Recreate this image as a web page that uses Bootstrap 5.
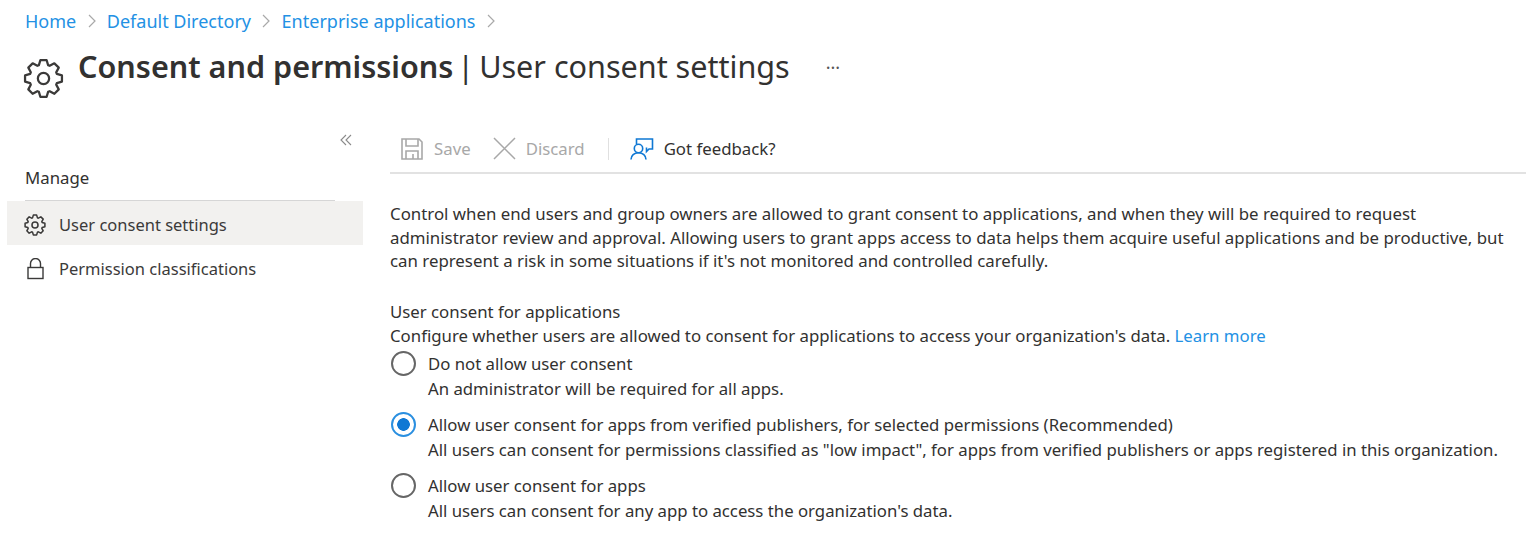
<!doctype html>
<html lang="en">
<head>
<meta charset="utf-8">
<title>Consent and permissions</title>
<link href="https://cdn.jsdelivr.net/npm/bootstrap@5.3.0/dist/css/bootstrap.min.css" rel="stylesheet">
<style>
html,body{height:100%;overflow:hidden}
body{font-family:"Noto Sans","Open Sans",sans-serif;font-size:16.8px;line-height:24px;color:#323130;background:#fff}
a{color:#2391e4;text-decoration:none}
.crumbs{padding:0 0 0 25px;height:42px;gap:10.300px;font-size:18px}
.crumbs svg{width:10px;height:14px}
.head-row{padding:2px 0 0 23px;height:74px}
.head-gear{width:41px;height:41px;margin-top:14px;margin-right:14px;flex:none}
.head-title{font-size:30.550px;line-height:44px;margin:0;font-weight:400}
.head-title b{font-weight:600}
.title-bar{margin:0 -3px 0 -4px}
.head-dots{margin-left:36px;margin-top:5px;font-size:18px;color:#555;line-height:36px}
.main-wrap{padding-top:11px}
.side-col{width:363px;flex:none;padding-left:7px}
.collapse-btn{height:34px;padding:6px 10px 0 0}
.collapse-btn svg{width:14px;height:14px;display:block;margin-left:auto}
.side-head{margin:0 28px 0 18px;height:40px;padding-top:5px;border-bottom:1px solid #d6d6d6}
.side-item{height:44px;padding:4px 0 0 17px;gap:13px;font-size:16.500px;color:#3b3a39}
.side-item.is-on{background:#f2f1ef}
.side-item svg{width:22px;height:22px;flex:none}
.content-col{flex:1;padding:0 5px 0 27px;min-width:0}
.tool-row{height:47px;border-bottom:2px solid #e2e2e2;padding:0 0 2px 11px}
.tool-off{color:#a8a8a8}
.ic-gap{margin-right:11px;flex:none}
.ic-fb{margin-right:10px;flex:none}
.ic-x{margin:0 10px 0 22px;flex:none}
.tool-sep{width:1px;height:22px;background:#e0e0e0;margin:0 21px 0 23px}
.intro{margin:28px 0 0;font-size:16.830px;line-height:23.500px;max-width:1130px}
.sect{margin:27.500px 0 0;line-height:24px}
.opt{gap:12px;margin-top:2.500px;padding-left:1px}
.opt .form-check-input{width:25px;height:25px;margin:0;flex:none;background-color:#fff;border:2px solid #666}
.opt .form-check-input:checked{border-color:#2a8fe0;background-color:#fff;background-image:radial-gradient(circle,#0f78d4 0,#0f78d4 6px,transparent 6.600px)}
.opt-txt{font-size:16.750px;line-height:25px}
.opt+.opt{margin-top:11px}
</style>
</head>
<body>
<nav class="crumbs d-flex align-items-center">
  <a href="#">Home</a>
  <svg viewBox="0 0 10 14" fill="none" stroke="#a9a9a9" stroke-width="1.2"><path d="M2 1l6 6-6 6"/></svg>
  <a href="#">Default Directory</a>
  <svg viewBox="0 0 10 14" fill="none" stroke="#a9a9a9" stroke-width="1.2"><path d="M2 1l6 6-6 6"/></svg>
  <a href="#">Enterprise applications</a>
  <svg viewBox="0 0 10 14" fill="none" stroke="#a9a9a9" stroke-width="1.2"><path d="M2 1l6 6-6 6"/></svg>
</nav>
<header class="head-row d-flex align-items-start">
  <svg class="head-gear" viewBox="0 0 40 40" fill="none" stroke="#3b3a39" stroke-width="2.200" stroke-linejoin="round">
    <circle cx="20" cy="20" r="5.500"/>
    <path d="M15.500 7L17 2H23L24.500 7L26 7.600L30.600 5.200L34.900 9.400L32.400 14L33 15.500L38 17V23L33 24.500L32.400 26L34.900 30.600L30.600 34.900L26 32.400L24.500 33L23 38H17L15.500 33L14 32.400L9.400 34.900L5.200 30.600L7.600 26L7 24.500L2 23V17L7 15.500L7.600 14L5.200 9.400L9.400 5.200L14 7.600Z"/>
  </svg>
  <h1 class="head-title"><b>Consent and permissions</b> <span class="title-bar">|</span> User consent settings</h1>
  <span class="head-dots">···</span>
</header>
<div class="main-wrap d-flex">
  <aside class="side-col">
    <div class="collapse-btn">
      <svg viewBox="0 0 14 14" fill="none" stroke="#8a8a8a" stroke-width="1.1"><path d="M7 2L2 7l5 5M12 2L7 7l5 5"/></svg>
    </div>
    <div class="side-head">Manage</div>
    <div class="side-item is-on d-flex align-items-center">
      <svg viewBox="0 0 40 40" fill="none" stroke="#3b3a39" stroke-width="2.800" stroke-linejoin="round"><circle cx="20" cy="20" r="5.500"/><path d="M15.500 7L17 2H23L24.500 7L26 7.600L30.600 5.200L34.900 9.400L32.400 14L33 15.500L38 17V23L33 24.500L32.400 26L34.900 30.600L30.600 34.900L26 32.400L24.500 33L23 38H17L15.500 33L14 32.400L9.400 34.900L5.200 30.600L7.600 26L7 24.500L2 23V17L7 15.500L7.600 14L5.200 9.400L9.400 5.200L14 7.600Z"/></svg>
      <span>User consent settings</span>
    </div>
    <div class="side-item d-flex align-items-center">
      <svg viewBox="0 0 22 22" fill="none" stroke="#3b3a39" stroke-width="1.400"><rect x="4" y="9.500" width="15" height="11"/><path d="M6.500 9.500V5.500a5 5 0 0 1 10 0v4"/></svg>
      <span>Permission classifications</span>
    </div>
  </aside>
  <main class="content-col">
    <div class="tool-row d-flex align-items-center">
      <svg class="ic-gap" width="22" height="22" viewBox="0 0 22 22" fill="none" stroke="#a8a8a8" stroke-width="1.600"><path d="M1 1h17l3 3v17H1z"/><path d="M5 1v7h12V1M5 21v-8h12v8M12 16v5"/></svg>
      <span class="tool-off">Save</span>
      <svg class="ic-x" width="23" height="23" viewBox="0 0 23 23" fill="none" stroke="#a8a8a8" stroke-width="1.500"><path d="M1 1l21 21M22 1L1 22"/></svg>
      <span class="tool-off">Discard</span>
      <span class="tool-sep"></span>
      <svg class="ic-fb" width="24" height="22" viewBox="0 0 24 22" fill="none" stroke="#0f78d4" stroke-width="1.600"><path d="M6.500 6V1H22.500V11H19L16.500 13.500V9.500"/><circle cx="8.500" cy="10.500" r="4.200"/><path d="M1 21.500c0-4 3.200-6.800 7.500-6.800s7.500 2.800 7.500 6.800"/></svg>
      <span>Got feedback?</span>
    </div>
    <p class="intro">Control when end users and group owners are allowed to grant consent to applications, and when they will be required to request administrator review and approval. Allowing users to grant apps access to data helps them acquire useful applications and be productive, but can represent a risk in some situations if it's not monitored and controlled carefully.</p>
    <div class="sect">User consent for applications<br>Configure whether users are allowed to consent for applications to access your organization's data. <a href="#">Learn more</a></div>
    <div class="opt d-flex">
      <input class="form-check-input" type="radio" name="consent" aria-label="Do not allow user consent">
      <div class="opt-txt">Do not allow user consent<br>An administrator will be required for all apps.</div>
    </div>
    <div class="opt d-flex">
      <input class="form-check-input" type="radio" name="consent" checked aria-label="Allow user consent for apps from verified publishers">
      <div class="opt-txt">Allow user consent for apps from verified publishers, for selected permissions (Recommended)<br>All users can consent for permissions classified as "low impact", for apps from verified publishers or apps registered in this organization.</div>
    </div>
    <div class="opt d-flex">
      <input class="form-check-input" type="radio" name="consent" aria-label="Allow user consent for apps">
      <div class="opt-txt">Allow user consent for apps<br>All users can consent for any app to access the organization's data.</div>
    </div>
  </main>
</div>
<script src="https://cdn.jsdelivr.net/npm/bootstrap@5.3.0/dist/js/bootstrap.bundle.min.js"></script>
</body>
</html>
